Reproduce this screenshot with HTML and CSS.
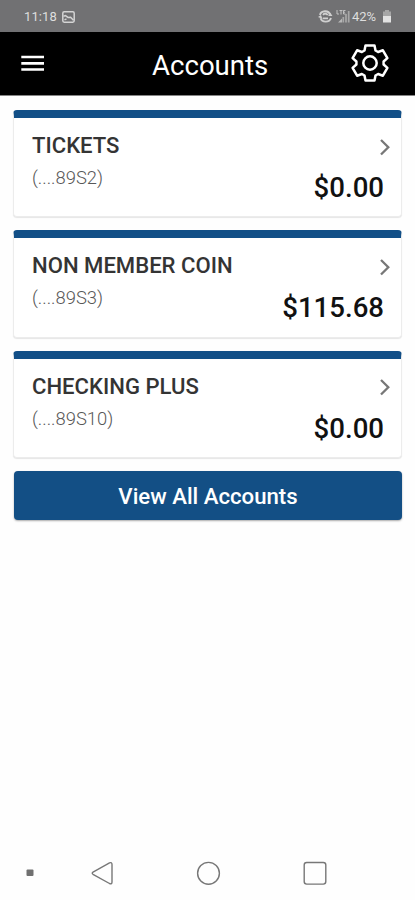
FILE: index.html
```html
<!DOCTYPE html>
<html lang="en">
<head>
<meta charset="utf-8">
<title>Accounts</title>
<link rel="stylesheet" href="styles.css">
</head>
<body>
<div class="status">
  <span class="time">11:18</span>
  <svg class="photo" width="13" height="12" viewBox="0 0 13 12"><rect x=".8" y=".8" width="11.4" height="10.4" rx="1.4" fill="none" stroke="#d4d4d4" stroke-width="1.5"/><path d="M1.5 5.2L3.5 4.6L6 6.4L8.6 6.2L11.5 9.2M2.5 8.8L4.5 7.8" fill="none" stroke="#d4d4d4" stroke-width="1.5"/></svg>
  <svg class="sync" width="15" height="13" viewBox="0 0 15 13"><path d="M2 5C3 .5 10.5-.2 12.2 4.5M13 8C11.5 12.8 4 12.8 2.6 8.3M5 4.8C6.5 3 9 3.5 9.8 5.2M4.8 8.4H10" fill="none" stroke="#d0d0d0" stroke-width="1.9"/><path d="M0 7L3 5L4.5 9ZM14.5 6L10 6L12.5 3Z" fill="#d0d0d0"/></svg>
  <svg class="signal" width="14" height="13" viewBox="0 0 14 13"><path d="M1 0V4H3M3.5.5H6.5M5 .5V4.5M9.5.5H7.5V4H9.5M7.5 2.2H9" fill="none" stroke="#cacaca" stroke-width=".9"/><path d="M2 12.5L6 8.5V12.5Z" fill="#b8b8b8"/><path d="M7.3 12.5V7M10 12.5V4M12.7 12.5V1" stroke="#a8a8a8" stroke-width="1.7"/></svg>
  <span class="percent">42%</span>
  <svg class="battery" width="10" height="13" viewBox="0 0 10 13"><path d="M3 0H7V1.5H9V6H1V1.5H3Z" fill="#a6a6a6"/><path d="M1 6H9V12.5H1Z" fill="#e2e2e2"/></svg>
</div>
<header class="appbar">
  <svg class="menu" width="23" height="17" viewBox="0 0 23 17"><path d="M.3 2H23M.3 8.3H23M.3 14.5H23" stroke="#fff" stroke-width="2.7"/></svg>
  <h1 class="title">Accounts</h1>
  <svg class="gear" width="40" height="40" viewBox="-20 -20 40 40"><path d="M-4.5-17.5H4.5L5.5-12.5L8.1-11L12.9-12.7L17.4-4.9L13.6-1.5V1.5L17.4 4.9L12.9 12.7L8.1 11L5.5 12.5L4.5 17.5H-4.5L-5.5 12.5L-8.1 11L-12.9 12.7L-17.4 4.9L-13.6 1.5V-1.5L-17.4-4.9L-12.9-12.7L-8.1-11L-5.5-12.5Z"/><circle r="6.7"/></svg>
</header>
<main class="accounts">
  <a class="card">
    <span class="row"><span class="name">TICKETS</span><svg class="chevron" width="12" height="18" viewBox="0 0 12 18"><path d="M2 2L9.3 9.2L2 16.5"/></svg></span>
    <span class="number">(....89S2)</span>
    <span class="balance">$0.00</span>
  </a>
  <a class="card">
    <span class="row"><span class="name">NON MEMBER COIN</span><svg class="chevron" width="12" height="18" viewBox="0 0 12 18"><path d="M2 2L9.3 9.2L2 16.5"/></svg></span>
    <span class="number">(....89S3)</span>
    <span class="balance">$115.68</span>
  </a>
  <a class="card">
    <span class="row"><span class="name">CHECKING PLUS</span><svg class="chevron" width="12" height="18" viewBox="0 0 12 18"><path d="M2 2L9.3 9.2L2 16.5"/></svg></span>
    <span class="number">(....89S10)</span>
    <span class="balance">$0.00</span>
  </a>
  <button class="all">View All Accounts</button>
</main>
<nav class="system">
  <svg width="415" height="54" viewBox="0 0 415 54"><rect x="26.5" y="23.5" width="7" height="6.5" rx="1" fill="#707070"/><g fill="none" stroke="#777" stroke-width="1.4"><path d="M93 26.1L109.5 16.9Q112 15.8 112 18.5V36Q112 38.7 109.5 37.5L93 28.3Q91.5 27.2 93 26.1Z"/><circle cx="208.5" cy="27.3" r="10.9"/><rect x="304.2" y="16.5" width="21.6" height="21.6" rx="2.5"/></g></svg>
</nav>
</body>
</html>
```
FILE: styles.css
```css
* { box-sizing: border-box; }
body {
  margin: 0;
  height: 900px;
  display: flex;
  flex-direction: column;
  background: #fefefe;
  font-family: Roboto, sans-serif;
  overflow: hidden;
}
.status {
  height: 32px;
  flex: none;
  display: flex;
  align-items: center;
  padding: 1px 23px 0 24px;
  background: #717173;
  color: #dedede;
  font-size: 13px;
}
.time { width: 38px; letter-spacing: 0.1px; }
.sync { margin-left: auto; }
.signal { margin-left: 3px; }
.percent { width: 28px; margin: 0 2px 0 2px; }
.appbar {
  height: 64px;
  flex: none;
  display: flex;
  align-items: center;
  padding: 0 25px 0 21px;
  background: #000;
  border-bottom: 1px solid #858585;
}
.title {
  margin: 3px auto 0 108px;
  color: #fff;
  font-size: 27.6px;
  font-weight: 400;
  white-space: nowrap;
}
.gear { margin-bottom: 1px; fill: none; stroke: #fff; stroke-width: 2.5; stroke-linejoin: round; }
.accounts {
  flex: 1;
  display: flex;
  flex-direction: column;
  gap: 13px;
  padding: 14px 13px 0;
}
.card {
  height: 107.3px;
  display: flex;
  flex-direction: column;
  padding: 15px 17px 0 18px;
  background: #fff;
  border: 1px solid #ececec;
  border-top: 8px solid #124f87;
  border-radius: 4px;
  box-shadow: 0 1px 1px #e6e6e6;
}
.row {
  height: 24px;
  display: flex;
  align-items: center;
  justify-content: space-between;
}
.name { color: #343434; font-size: 22.1px; font-weight: 500; }
.chevron { margin: 3px -7px 0 0; fill: none; stroke: #777; stroke-width: 2.3; }
.number { height: 20px; margin-top: 11px; line-height: 20px; color: #585858; font-size: 18.4px; font-weight: 300; }
.balance { margin-top: -18px; line-height: 36px; align-self: flex-end; color: #111; font-size: 27.6px; font-weight: 500; }
.all {
  height: 49px;
  margin: 0 0 0 1px;
  padding: 2px 0 0;
  border: 0;
  border-radius: 4px;
  background: #134f85;
  box-shadow: 0 1px 2px #aaa;
  color: #fff;
  font: 500 22.2px Roboto, sans-serif;
}
.system { height: 54px; flex: none; }
.system svg { display: block; }
```
